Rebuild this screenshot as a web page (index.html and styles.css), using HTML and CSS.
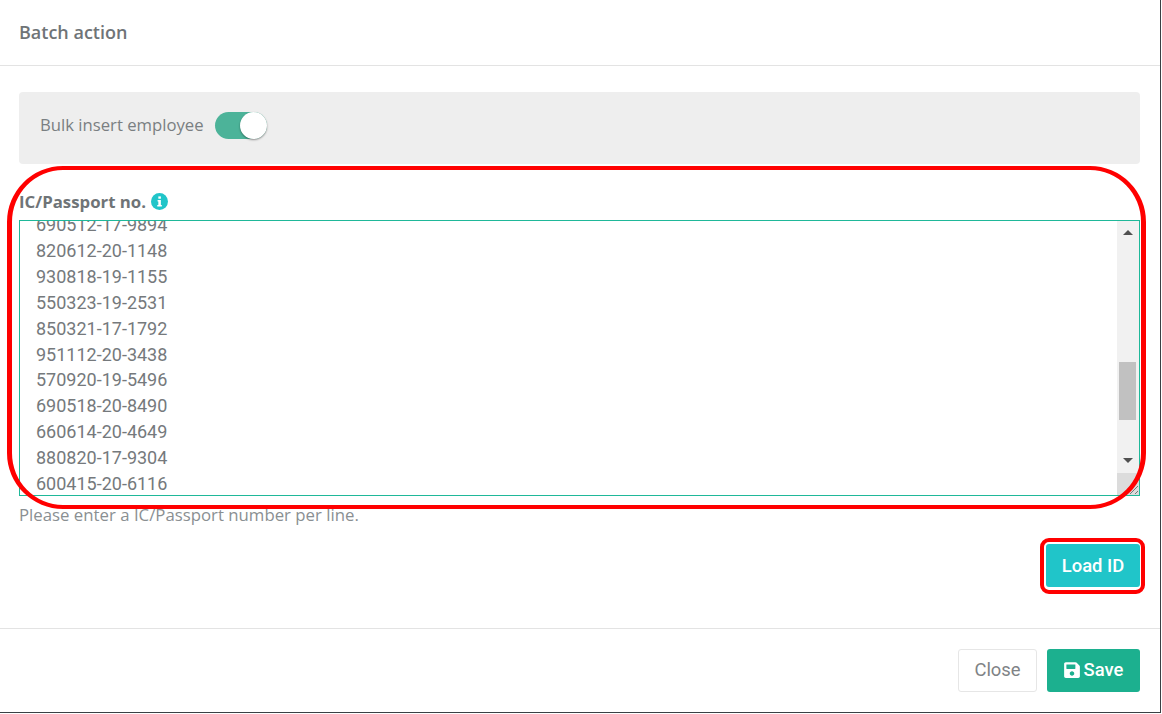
FILE: index.html
```html
<!DOCTYPE html>
<html lang="en">
<head>
	<meta charset="UTF-8">
	<title>Batch action</title>
	<link rel="stylesheet" href="styles.css">
</head>
<body>
	<div class="modal">
		<div class="modal-header">Batch action</div>

		<div class="modal-body">
			<div class="bulk-panel">
				<span class="bulk-label">Bulk insert employee</span>
				<span class="toggle"><span class="toggle-knob"></span></span>
			</div>

			<div class="field-label">
				IC/Passport no.
				<svg class="info-icon" viewBox="0 0 16 16">
					<circle cx="8" cy="8" r="8" fill="#20c5c9"/>
					<rect x="6.9" y="3.2" width="2.4" height="2.2" fill="#fff"/>
					<path d="M6.2 6.6h3.1v4.6h0.9v1.4H5.9v-1.4h1V8h-0.7z" fill="#fff"/>
				</svg>
			</div>

			<div class="id-box">
				<div class="id-list">
					<div class="id-scroll">
						<div>690512-17-9894</div>
						<div>820612-20-1148</div>
						<div>930818-19-1155</div>
						<div>550323-19-2531</div>
						<div>850321-17-1792</div>
						<div>951112-20-3438</div>
						<div>570920-19-5496</div>
						<div>690518-20-8490</div>
						<div>660614-20-4649</div>
						<div>880820-17-9304</div>
						<div>600415-20-6116</div>
					</div>
				</div>
				<div class="scrollbar">
					<span class="arrow-up"></span>
					<span class="scroll-track"><span class="scroll-thumb"></span></span>
					<span class="arrow-down"></span>
					<span class="scroll-corner">
						<svg viewBox="0 0 22 22" width="22" height="22">
							<path d="M13 21L21 13M18 21L21 18" stroke="#777" stroke-width="1"/>
						</svg>
					</span>
				</div>
			</div>
			<div class="hint">Please enter a IC/Passport number per line.</div>

			<div class="load-row">
				<button class="btn btn-load">Load ID</button>
			</div>
		</div>

		<div class="modal-footer">
			<button class="btn btn-close">Close</button>
			<button class="btn btn-save">
				<svg class="save-icon" viewBox="0 0 448 512">
					<path fill="#fff" d="M433.941 129.941l-83.882-83.882A48 48 0 0 0 316.118 32H48C21.490 32 0 53.490 0 80v352c0 26.510 21.490 48 48 48h352c26.510 0 48-21.490 48-48V163.882a48 48 0 0 0-14.059-33.941zM224 416c-35.346 0-64-28.654-64-64 0-35.346 28.654-64 64-64s64 28.654 64 64c0 35.346-28.654 64-64 64zm96-304.520V212c0 6.627-5.373 12-12 12H76c-6.627 0-12-5.373-12-12V108c0-6.627 5.373-12 12-12h228.520c3.183 0 6.235 1.264 8.485 3.515l3.480 3.480A11.996 11.996 0 0 1 320 111.480z"/>
				</svg>
				Save
			</button>
		</div>
	</div>

	<div class="mark mark-field"></div>
	<div class="mark mark-load"></div>
</body>
</html>
```

FILE: styles.css
```css
* {
	margin: 0;
	padding: 0;
	box-sizing: border-box;
}
body {
	width: 1162px;
	height: 714px;
	background: #fff;
	font-family: "Open Sans", sans-serif;
	color: #6c757d;
	overflow: hidden;
}
.modal {
	width: 1161px;
	height: 713px;
	background: #fff;
	border-right: 1px solid #3a3f44;
	border-bottom: 1px solid #3a3f44;
	display: flex;
	flex-direction: column;
}
.modal-header {
	height: 66px;
	padding: 20px 19px 0;
	border-bottom: 1px solid #e3e3e3;
	font-size: 18px;
	font-weight: 600;
	line-height: 24px;
	color: #6f7477;
}
.modal-body {
	height: 562px;
	padding: 26px 20px 0 19px;
}
.bulk-panel {
	height: 72px;
	padding-left: 21px;
	background: #eee;
	border-radius: 4px;
	display: flex;
	align-items: center;
	gap: 11px;
	padding-bottom: 6px;
}
.bulk-label {
	font-size: 16.7px;
	line-height: 22px;
	margin-top: -1px;
	color: #7a7f82;
}
.toggle {
	width: 52px;
	height: 27px;
	border-radius: 14px;
	background: #4cb399;
	display: block;
	position: relative;
}
.toggle-knob {
	position: absolute;
	right: 0;
	top: 0;
	width: 27px;
	height: 27px;
	border-radius: 50%;
	background: #fff;
	box-shadow: 0 1px 2px rgba(0, 0, 0, 0.4);
}
.field-label {
	margin-top: 27px;
	height: 21px;
	font-size: 16.8px;
	font-weight: 700;
	line-height: 21px;
	color: #6f7477;
	display: flex;
	align-items: center;
	gap: 5px;
}
.info-icon {
	width: 17px;
	height: 17px;
}
.id-box {
	margin-top: 8px;
	height: 276px;
	border: 1px solid #1fb899;
	display: flex;
}
.id-list {
	flex: 1;
	overflow: hidden;
}
.id-scroll {
	margin-top: -9px;
	padding-left: 16px;
	font-family: Roboto, sans-serif;
	font-size: 18px;
	line-height: 25.9px;
	color: #75797c;
}
.scrollbar {
	width: 22px;
	background: #f1f1f1;
	display: flex;
	flex-direction: column;
	align-items: center;
}
.arrow-up,
.arrow-down {
	width: 0;
	height: 0;
	border-left: 5px solid transparent;
	border-right: 5px solid transparent;
	flex: none;
}
.arrow-up {
	margin-top: 9px;
	border-bottom: 5px solid #505050;
}
.arrow-down {
	border-top: 5px solid #505050;
}
.scroll-track {
	flex: 1;
	width: 100%;
	padding: 127px 3px 0 2px;
	display: block;
}
.scroll-thumb {
	display: block;
	height: 58px;
	background: #c1c1c1;
}
.scroll-corner {
	display: block;
	width: 22px;
	height: 22px;
	margin-top: 10px;
	background: #dcdcdc;
}
.hint {
	margin-top: 9px;
	font-size: 16.8px;
	line-height: 20px;
	color: #8a8f92;
}
.load-row {
	margin-top: 19px;
	display: flex;
	justify-content: flex-end;
}
.btn {
	font-family: Roboto, sans-serif;
	font-size: 18.4px;
	font-weight: 500;
	border-radius: 3px;
	border: 1px solid transparent;
	display: flex;
	align-items: center;
	justify-content: center;
}
.btn-load {
	width: 94px;
	height: 43px;
	background: #20c5c9;
	color: #fff;
}
.modal-footer {
	flex: 1;
	border-top: 1px solid #e3e3e3;
	padding: 20px 20px 0 0;
	display: flex;
	justify-content: flex-end;
	align-items: flex-start;
	gap: 10px;
}
.btn-close,
.btn-save {
	height: 43px;
	padding-bottom: 2px;
}
.btn-close {
	width: 79px;
	background: #fff;
	border-color: #e6e6e6;
	color: #7f8386;
	font-weight: 400;
}
.btn-save {
	width: 93px;
	background: #1cb08f;
	color: #fff;
	gap: 4px;
}
.save-icon {
	width: 16px;
	height: 18px;
}
/* red annotations drawn over the screenshot */
.mark {
	position: absolute;
	border: 4px solid #f00;
}
.mark-field {
	left: 7px;
	top: 166px;
	width: 1139px;
	height: 343px;
	border-width: 4px 5px;
	border-radius: 56px;
}
.mark-load {
	left: 1040px;
	top: 538px;
	width: 105px;
	height: 56px;
	border-radius: 9px;
}
```
